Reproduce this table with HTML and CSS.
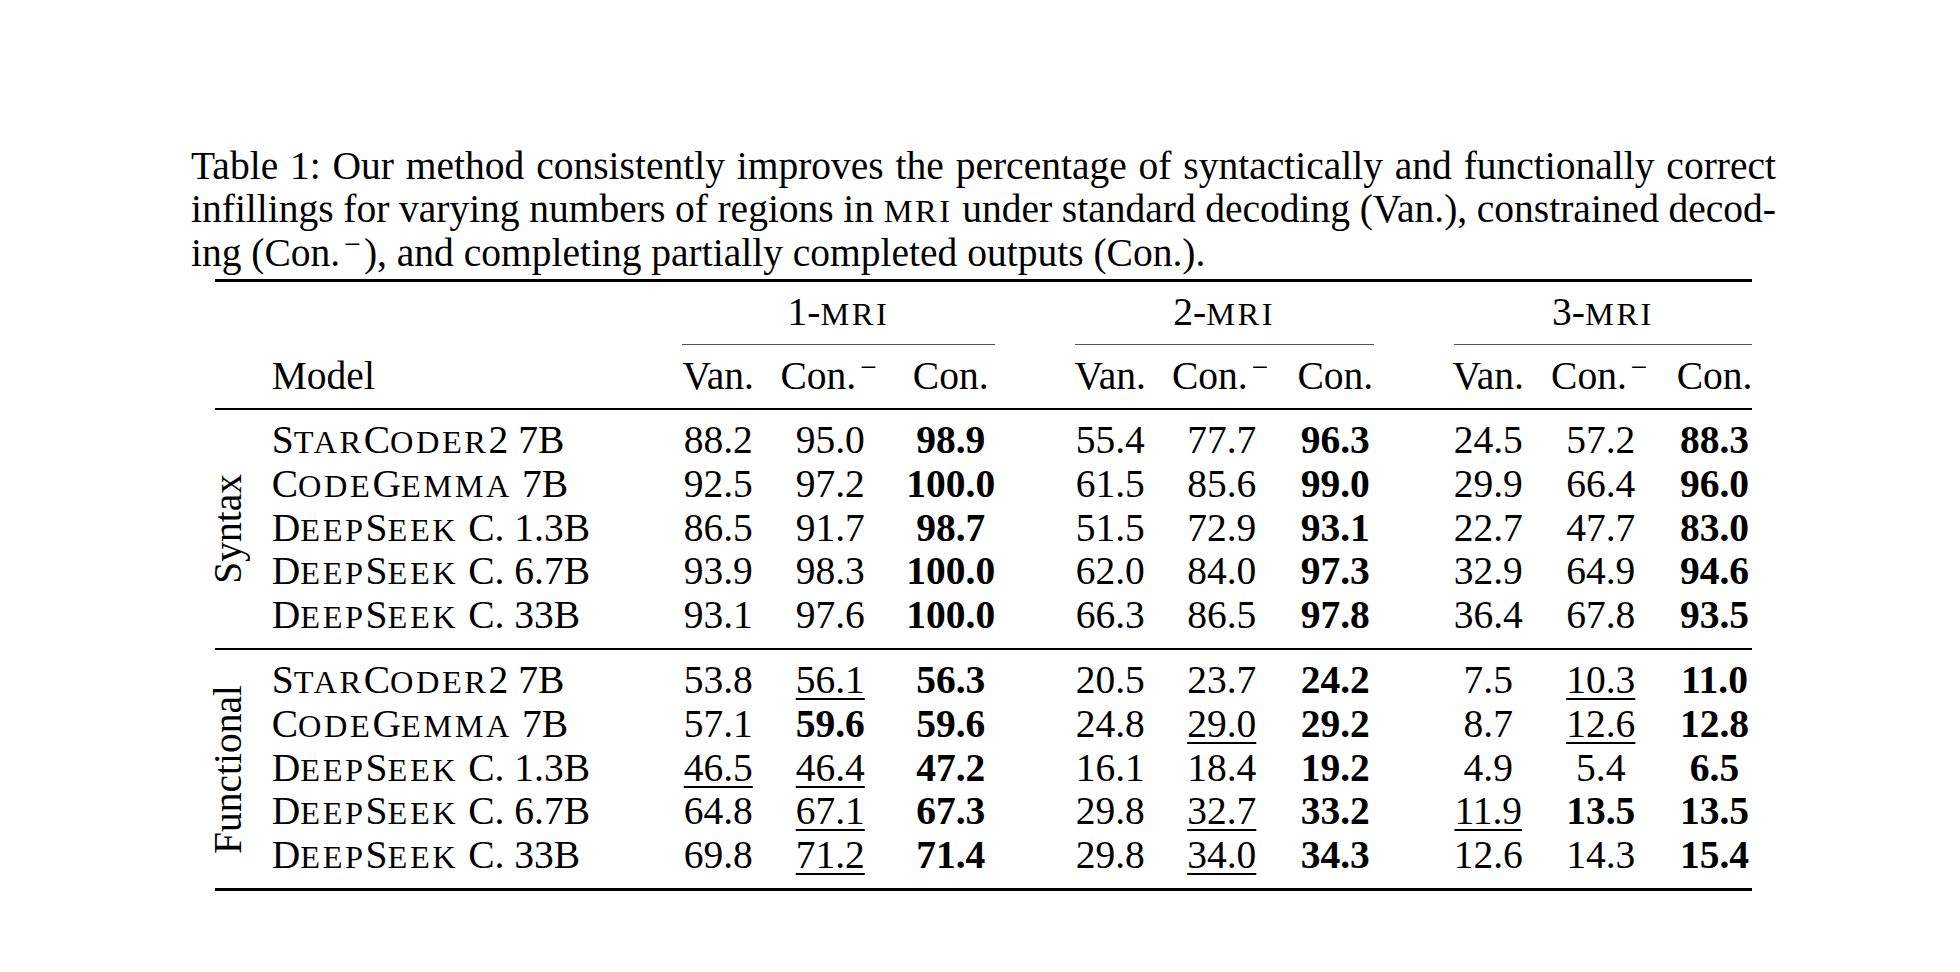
FILE: index.html
```html
<!DOCTYPE html>
<html lang="en">
<head>
<meta charset="utf-8">
<title>Table 1</title>
<link rel="stylesheet" href="styles.css">
</head>
<body>
<div class="page">
  <div class="caption">
    <div class="cap-line just">Table 1: Our method consistently improves the percentage of syntactically and functionally correct</div>
    <div class="cap-line just">infillings for varying numbers of regions in <span class="sc">mri</span> under standard decoding (Van.), constrained decod-</div>
    <div class="cap-line">ing (Con.<sup class="neg">−</sup>), and completing partially completed outputs (Con.).</div>
  </div>
  <table class="results">
    <colgroup>
      <col class="w-lab"><col class="w-model">
      <col class="w-v1"><col class="w-m1"><col class="w-c1">
      <col class="w-sp">
      <col class="w-v2"><col class="w-m2"><col class="w-c2">
      <col class="w-sp">
      <col class="w-v3"><col class="w-m3"><col class="w-c3">
    </colgroup>
    <thead>
      <tr class="h1">
        <th></th><th></th>
        <th colspan="3"><div class="cmid g1">1-<span class="sc">mri</span></div></th>
        <th></th>
        <th colspan="3"><div class="cmid g2">2-<span class="sc">mri</span></div></th>
        <th></th>
        <th colspan="3"><div class="cmid g3">3-<span class="sc">mri</span></div></th>
      </tr>
      <tr class="h2">
        <th></th><th class="model">Model</th>
        <th>Van.</th><th>Con.<sup class="neg">−</sup></th><th>Con.</th>
        <th></th>
        <th>Van.</th><th>Con.<sup class="neg">−</sup></th><th>Con.</th>
        <th></th>
        <th>Van.</th><th>Con.<sup class="neg">−</sup></th><th class="lc">Con.</th>
      </tr>
    </thead>
    <tbody class="syn">
      <tr class="first">
        <td rowspan="5" class="lab"><span class="rot">Syntax</span></td>
        <td class="model">S<span class="sc">tar</span>C<span class="sc">oder</span>2 7B</td>
        <td>88.2</td><td>95.0</td><td><b>98.9</b></td><td></td>
        <td>55.4</td><td>77.7</td><td><b>96.3</b></td><td></td>
        <td>24.5</td><td>57.2</td><td class="lc"><b>88.3</b></td>
      </tr>
      <tr>
        <td class="model">C<span class="sc">ode</span>G<span class="sc">emma</span> 7B</td>
        <td>92.5</td><td>97.2</td><td><b>100.0</b></td><td></td>
        <td>61.5</td><td>85.6</td><td><b>99.0</b></td><td></td>
        <td>29.9</td><td>66.4</td><td class="lc"><b>96.0</b></td>
      </tr>
      <tr>
        <td class="model">D<span class="sc">eep</span>S<span class="sc">eek</span> C. 1.3B</td>
        <td>86.5</td><td>91.7</td><td><b>98.7</b></td><td></td>
        <td>51.5</td><td>72.9</td><td><b>93.1</b></td><td></td>
        <td>22.7</td><td>47.7</td><td class="lc"><b>83.0</b></td>
      </tr>
      <tr>
        <td class="model">D<span class="sc">eep</span>S<span class="sc">eek</span> C. 6.7B</td>
        <td>93.9</td><td>98.3</td><td><b>100.0</b></td><td></td>
        <td>62.0</td><td>84.0</td><td><b>97.3</b></td><td></td>
        <td>32.9</td><td>64.9</td><td class="lc"><b>94.6</b></td>
      </tr>
      <tr class="last">
        <td class="model">D<span class="sc">eep</span>S<span class="sc">eek</span> C. 33B</td>
        <td>93.1</td><td>97.6</td><td><b>100.0</b></td><td></td>
        <td>66.3</td><td>86.5</td><td><b>97.8</b></td><td></td>
        <td>36.4</td><td>67.8</td><td class="lc"><b>93.5</b></td>
      </tr>
    </tbody>
    <tbody class="fun">
      <tr class="first">
        <td rowspan="5" class="lab"><span class="rot">Functional</span></td>
        <td class="model">S<span class="sc">tar</span>C<span class="sc">oder</span>2 7B</td>
        <td>53.8</td><td><u>56.1</u></td><td><b>56.3</b></td><td></td>
        <td>20.5</td><td>23.7</td><td><b>24.2</b></td><td></td>
        <td>7.5</td><td><u>10.3</u></td><td class="lc"><b>11.0</b></td>
      </tr>
      <tr>
        <td class="model">C<span class="sc">ode</span>G<span class="sc">emma</span> 7B</td>
        <td>57.1</td><td><b>59.6</b></td><td><b>59.6</b></td><td></td>
        <td>24.8</td><td><u>29.0</u></td><td><b>29.2</b></td><td></td>
        <td>8.7</td><td><u>12.6</u></td><td class="lc"><b>12.8</b></td>
      </tr>
      <tr>
        <td class="model">D<span class="sc">eep</span>S<span class="sc">eek</span> C. 1.3B</td>
        <td><u>46.5</u></td><td><u>46.4</u></td><td><b>47.2</b></td><td></td>
        <td>16.1</td><td>18.4</td><td><b>19.2</b></td><td></td>
        <td>4.9</td><td>5.4</td><td class="lc"><b>6.5</b></td>
      </tr>
      <tr>
        <td class="model">D<span class="sc">eep</span>S<span class="sc">eek</span> C. 6.7B</td>
        <td>64.8</td><td><u>67.1</u></td><td><b>67.3</b></td><td></td>
        <td>29.8</td><td><u>32.7</u></td><td><b>33.2</b></td><td></td>
        <td><u>11.9</u></td><td><b>13.5</b></td><td class="lc"><b>13.5</b></td>
      </tr>
      <tr class="last">
        <td class="model">D<span class="sc">eep</span>S<span class="sc">eek</span> C. 33B</td>
        <td>69.8</td><td><u>71.2</u></td><td><b>71.4</b></td><td></td>
        <td>29.8</td><td><u>34.0</u></td><td><b>34.3</b></td><td></td>
        <td>12.6</td><td>14.3</td><td class="lc"><b>15.4</b></td>
      </tr>
    </tbody>
  </table>
</div>
</body>
</html>
```

FILE: styles.css
```css
body {
  margin: 0;
  background: #fff;
  color: #000;
  font-family: "Liberation Serif", "Times New Roman", serif;
  font-size: 39.5px;
  line-height: 43.75px;
}

.page {
  padding: 144.5px 0 0 191px;
  width: 1585px;
}

.just {
  text-align: justify;
  text-align-last: justify;
  word-spacing: -3px;
}

.sc {
  text-transform: uppercase;
  font-size: 0.82em;
  letter-spacing: 0.08em;
  line-height: 1;
}

.neg {
  font-size: 0.75em;
  vertical-align: 0.4em;
  line-height: 0;
  padding: 0 3px 0 4px;
}

.results {
  width: 1537.5px;
  margin: 3.25px auto 0;
  border-collapse: separate;
  border-spacing: 0;
  table-layout: fixed;
  border-top: 3px solid #000;
  border-bottom: 3px solid #000;
}

.w-lab { width: 57px; }
.w-model { width: 390px; }
.w-v1 { width: 113px; }
.w-m1 { width: 111px; }
.w-c1 { width: 130px; }
.w-sp { width: 39px; }
.w-v2 { width: 111px; }
.w-m2 { width: 112px; }
.w-c2 { width: 115px; }
.w-v3 { width: 113px; }
.w-m3 { width: 112px; }
.w-c3 { width: 95.5px; }

.results th,
.results td {
  padding: 0;
  text-align: center;
  font-weight: normal;
  white-space: nowrap;
  line-height: 43.75px;
}

.results .model {
  text-align: left;
}

.results .lc {
  padding-left: 20px;
}

.cmid {
  padding: 8.5px 0 9.75px;
  border-bottom: 1px solid #555;
}

.g1 { margin: 0 21px 0 20.5px; }
.g2 { margin: 0 19px 0 20px; }
.g3 { margin: 0 0 0 22px; }

.h2 th {
  padding-top: 10px;
  padding-bottom: 9.25px;
  border-bottom: 2px solid #000;
}

.first td:not(.lab) {
  padding-top: 9px;
}

.last td {
  padding-bottom: 10.25px;
}

.fun .first td {
  border-top: 2px solid #000;
}

.results b {
  font-weight: bold;
}

.results u {
  text-decoration: underline;
  text-decoration-thickness: 1.5px;
  text-underline-offset: 5px;
}

.results .lab {
  font-size: 0;
  line-height: 0;
  vertical-align: middle;
  text-align: left;
}

.rot {
  display: inline-block;
  vertical-align: middle;
  writing-mode: vertical-rl;
  transform: rotate(180deg);
  font-size: 39.5px;
  line-height: 26px;
}
```
